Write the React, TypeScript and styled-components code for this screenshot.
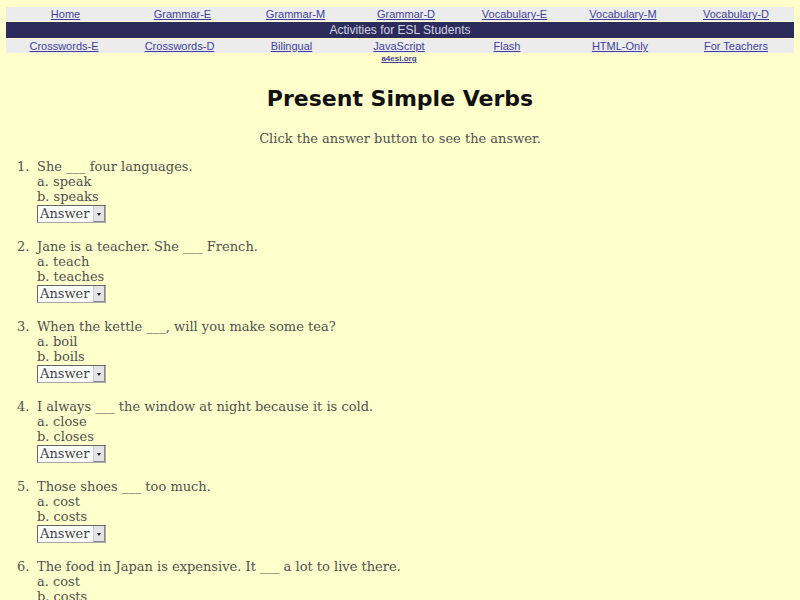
import styled, { createGlobalStyle } from "styled-components";

const GlobalStyle = createGlobalStyle`
  html, body {
    margin: 0;
    padding: 0;
    background: #ffffcc;
  }
`;

const topLinks = [
  "Home",
  "Grammar-E",
  "Grammar-M",
  "Grammar-D",
  "Vocabulary-E",
  "Vocabulary-M",
  "Vocabulary-D",
];

const bottomLinks = [
  "Crosswords-E",
  "Crosswords-D",
  "Bilingual",
  "JavaScript",
  "Flash",
  "HTML-Only",
  "For Teachers",
];

// column widths follow the auto table layout of the original page
const topCols = "119fr 115fr 111fr 110fr 107fr 110fr 116fr";
const bottomCols = "116fr 115fr 109fr 106fr 110fr 116fr 116fr";

const questions = [
  { text: "She ___ four languages.", a: "speak", b: "speaks" },
  { text: "Jane is a teacher. She ___ French.", a: "teach", b: "teaches" },
  { text: "When the kettle ___, will you make some tea?", a: "boil", b: "boils" },
  {
    text: "I always ___ the window at night because it is cold.",
    a: "close",
    b: "closes",
  },
  { text: "Those shoes ___ too much.", a: "cost", b: "costs" },
  {
    text: "The food in Japan is expensive. It ___ a lot to live there.",
    a: "cost",
    b: "costs",
  },
];

const App = () => (
  <Page>
    <GlobalStyle />
    <Nav>
      <LinkRow $cols={topCols}>
        {topLinks.map((l) => (
          <NavLink key={l} href="#">
            {l}
          </NavLink>
        ))}
      </LinkRow>
      <Banner>Activities for ESL Students</Banner>
      <LinkRow $cols={bottomCols}>
        {bottomLinks.map((l) => (
          <NavLink key={l} href="#">
            {l}
          </NavLink>
        ))}
      </LinkRow>
      <SubRow $cols={bottomCols}>
        <span />
        <span />
        <span />
        <SmallLink href="#">a4esl.org</SmallLink>
      </SubRow>
    </Nav>

    <Title>Present Simple Verbs</Title>
    <Intro>Click the answer button to see the answer.</Intro>

    <Quiz>
      {questions.map((q, i) => (
        <Question key={q.text}>
          <Num>{i + 1}.</Num>
          <Body>
            {q.text}
            <Option>a. {q.a}</Option>
            <Option>b. {q.b}</Option>
            <Dropdown>
              <DropValue>Answer</DropValue>
              <DropArrow />
            </Dropdown>
          </Body>
        </Question>
      ))}
    </Quiz>
  </Page>
);

const Page = styled.div`
  padding: 7px 6px 0;
  height: 600px;
  box-sizing: border-box;
  overflow: hidden;
`;

const Nav = styled.div`
  font-family: "Liberation Sans", Arial, sans-serif;
`;

const LinkRow = styled.div<{ $cols: string }>`
  display: grid;
  grid-template-columns: ${({ $cols }) => $cols};
  background: #ececec;
  height: 14px;
  align-items: center;
  justify-items: center;
`;

const NavLink = styled.a`
  font-size: 11px;
  line-height: 14px;
  color: #3f3f99;
  text-decoration: underline;
`;

const Banner = styled.div`
  background: #2c2c5c;
  color: #d4d4e4;
  font-size: 12px;
  height: 16px;
  line-height: 16px;
  text-align: center;
  margin: 1px 0;
`;

const SubRow = styled.div<{ $cols: string }>`
  display: grid;
  grid-template-columns: ${({ $cols }) => $cols};
  justify-items: center;
  height: 12px;
`;

const SmallLink = styled.a`
  font-size: 8px;
  font-weight: bold;
  line-height: 12px;
  color: #3f3f99;
  text-decoration: underline;
`;

const Title = styled.h1`
  margin: 18px 0 0;
  text-align: center;
  font-family: "DejaVu Sans", sans-serif;
  font-weight: bold;
  font-size: 22px;
  line-height: 32px;
  color: #111;
`;

const Intro = styled.p`
  margin: 16px 0 0;
  text-align: center;
  font-family: "DejaVu Serif", serif;
  font-size: 13px;
  line-height: 16px;
  color: #505050;
`;

const Quiz = styled.ol`
  margin: 12px 0 0;
  padding: 0 0 0 11px;
  list-style: none;
  font-family: "DejaVu Serif", serif;
  font-size: 13px;
  line-height: 15px;
  color: #505050;
`;

const Question = styled.li`
  display: flex;
  margin-bottom: 16px;
`;

const Num = styled.span`
  width: 20px;
  flex: none;
`;

const Body = styled.div``;

const Option = styled.div``;

const Dropdown = styled.div`
  display: inline-flex;
  align-items: stretch;
  margin-top: 1px;
  height: 18px;
  width: 69px;
  box-sizing: border-box;
  background: #fff;
  border: 1px solid #aaa;
  border-top-color: #666;
  border-left-color: #666;
`;

const DropValue = styled.span`
  flex: 1;
  padding-left: 2px;
  line-height: 16px;
  color: #444;
`;

const DropArrow = styled.span`
  width: 12px;
  background: #e4e4e4;
  border-left: 1px solid #ccc;
  border-right: 1px solid #888;
  border-bottom: 1px solid #888;
  box-sizing: border-box;
  position: relative;
  &::after {
    content: "";
    position: absolute;
    left: 3px;
    top: 7px;
    border-left: 2px solid transparent;
    border-right: 2px solid transparent;
    border-top: 3px solid #222;
  }
`;

export default App;
